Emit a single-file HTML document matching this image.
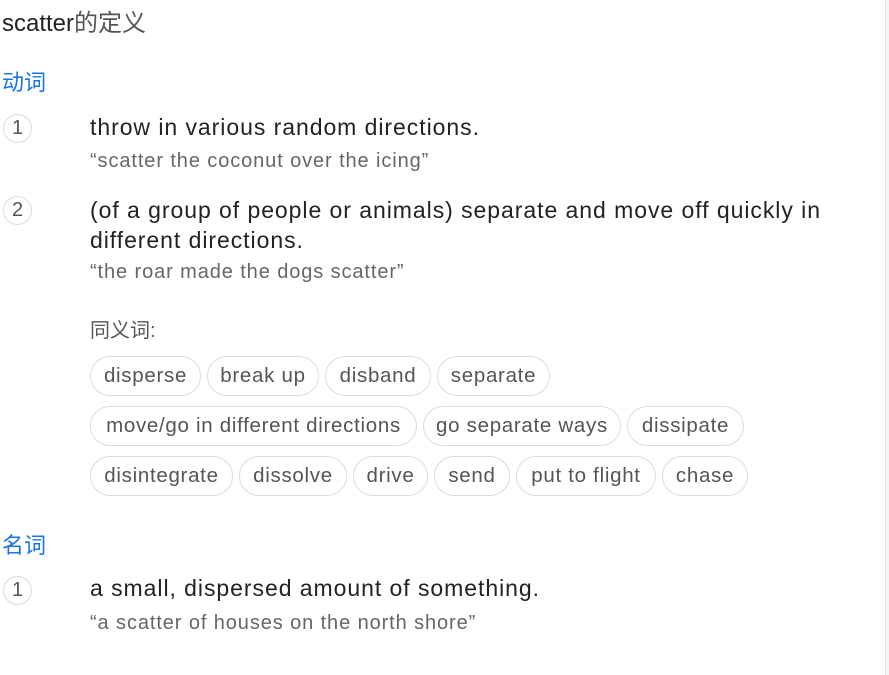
<!DOCTYPE html>
<html><head><meta charset="utf-8"><style>
body{margin:0;width:889px;height:675px;background:#fff;position:relative;overflow:hidden;font-family:"Liberation Sans","Noto Sans CJK SC",sans-serif}
.a{position:absolute;white-space:nowrap}
.t{color:#222;font-size:23px;letter-spacing:0.95px}
.e{color:#666;font-size:20px;letter-spacing:0.9px}
.pos{color:#1a73e8;font-size:22px}
.n{position:absolute;width:29px;height:29px;border:1px solid #dadce0;border-radius:50%;box-sizing:border-box;color:#555;font-size:20px;text-align:center;line-height:27px}
.c{position:absolute;height:40px;border:1px solid #dadce0;border-radius:20px;box-sizing:border-box;color:#555;font-size:20.5px;letter-spacing:0.7px;text-align:center;line-height:38px}
</style></head><body>
<div class="a" style="left:2px;top:3px;font-size:24px;color:#222">scatter<span style="color:#555">的定义</span></div>
<div class="a pos" style="left:2px;top:65px">动词</div>
<div class="n" style="left:3px;top:114px">1</div>
<div class="a t" style="left:90px;top:114px">throw in various random directions.</div>
<div class="a e" style="left:90px;top:150px">“scatter the coconut over the icing”</div>
<div class="n" style="left:3px;top:196px">2</div>
<div class="a t" style="left:90px;top:195px;line-height:30px">(of a group of people or animals) separate and move off quickly in<br>different directions.</div>
<div class="a e" style="left:90px;top:261px">“the roar made the dogs scatter”</div>
<div class="a" style="left:90px;top:314px;font-size:20px;color:#555">同义词:</div>
<div class="c" style="left:90px;top:356px;width:111px">disperse</div>
<div class="c" style="left:207px;top:356px;width:112px">break up</div>
<div class="c" style="left:325px;top:356px;width:106px">disband</div>
<div class="c" style="left:437px;top:356px;width:113px">separate</div>
<div class="c" style="left:90px;top:406px;width:327px">move/go in different directions</div>
<div class="c" style="left:423px;top:406px;width:198px">go separate ways</div>
<div class="c" style="left:627px;top:406px;width:117px">dissipate</div>
<div class="c" style="left:90px;top:456px;width:143px">disintegrate</div>
<div class="c" style="left:239px;top:456px;width:108px">dissolve</div>
<div class="c" style="left:353px;top:456px;width:75px">drive</div>
<div class="c" style="left:434px;top:456px;width:76px">send</div>
<div class="c" style="left:516px;top:456px;width:140px">put to flight</div>
<div class="c" style="left:662px;top:456px;width:86px">chase</div>
<div class="a pos" style="left:2px;top:528px">名词</div>
<div class="n" style="left:3px;top:576px">1</div>
<div class="a t" style="left:90px;top:575px">a small, dispersed amount of something.</div>
<div class="a e" style="left:90px;top:612px">“a scatter of houses on the north shore”</div>
<div style="position:absolute;left:885px;top:0;width:1px;height:675px;background:#e0e0e0"></div>
<div style="position:absolute;left:886px;top:0;width:3px;height:675px;background:#f4f4f4"></div>
</body></html>
